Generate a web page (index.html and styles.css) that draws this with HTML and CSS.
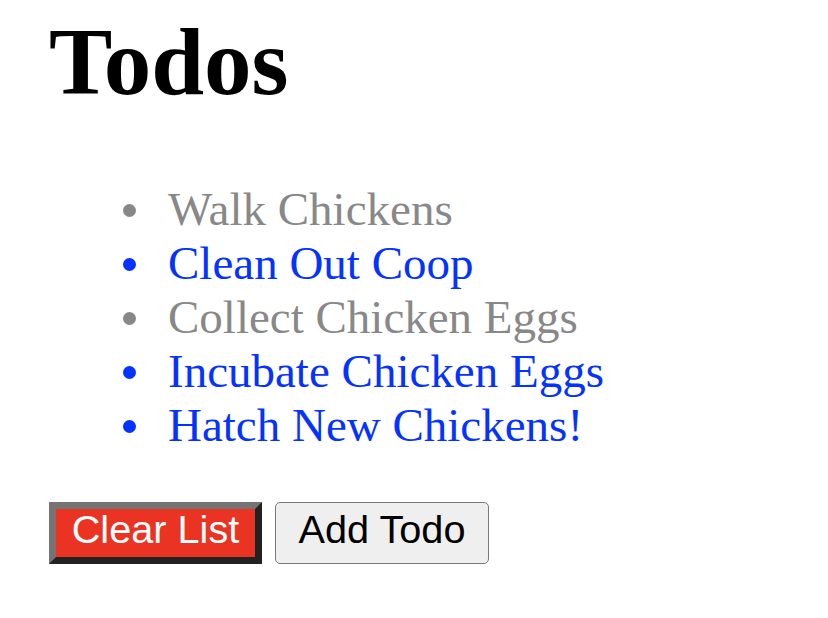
FILE: index.html
```html
<!DOCTYPE html>
<html lang="en">
<head>
<meta charset="utf-8">
<title>Todos</title>
<link rel="stylesheet" href="styles.css">
</head>
<body>
<div class="app">
  <h1 class="title">Todos</h1>
  <ul class="todos">
    <li class="todo done">Walk Chickens</li>
    <li class="todo">Clean Out Coop</li>
    <li class="todo done">Collect Chicken Eggs</li>
    <li class="todo">Incubate Chicken Eggs</li>
    <li class="todo">Hatch New Chickens!</li>
  </ul>
  <div class="actions">
    <button class="btn btn-clear">Clear List</button>
    <button class="btn btn-add">Add Todo</button>
  </div>
</div>
</body>
</html>
```

FILE: styles.css
```css
html, body {
  margin: 0;
  padding: 0;
  background: #ffffff;
}

.app {
  padding: 8px 0 0 49px;
  font-family: "Liberation Serif", "Times New Roman", serif;
}

.title {
  margin: 0;
  font-size: 95px;
  line-height: 1.15;
  font-weight: bold;
  color: #000;
}

.todos {
  list-style: none;
  margin: 65px 0 0 0;
  padding: 0 0 0 74px;
}

.todo {
  display: flex;
  align-items: center;
  gap: 32px;
  font-size: 47px;
  line-height: 54px;
  color: #0432ff;
}

.todo::before {
  content: "";
  flex: none;
  width: 13px;
  height: 13px;
  border-radius: 50%;
  background: currentColor;
  transform: translateY(1px);
}

.todo.done {
  color: #888888;
}

.actions {
  display: flex;
  gap: 13px;
  margin-top: 50px;
}

.btn {
  box-sizing: border-box;
  height: 62px;
  display: inline-flex;
  align-items: center;
  justify-content: center;
  font-family: "Liberation Sans", Arial, sans-serif;
  font-size: 39.7px;
  line-height: 1;
  padding: 0 0 7px 0;
  margin: 0;
  cursor: pointer;
}

.btn-clear {
  width: 213px;
  background: #ea3323;
  color: #ffffff;
  border-style: solid;
  border-width: 7px;
  border-color: #747474 #222222 #222222 #747474;
  border-radius: 0;
}

.btn-add {
  width: 214px;
  background: #efefef;
  color: #000000;
  border: 1px solid #7a7a7a;
  border-radius: 5px;
}
```
